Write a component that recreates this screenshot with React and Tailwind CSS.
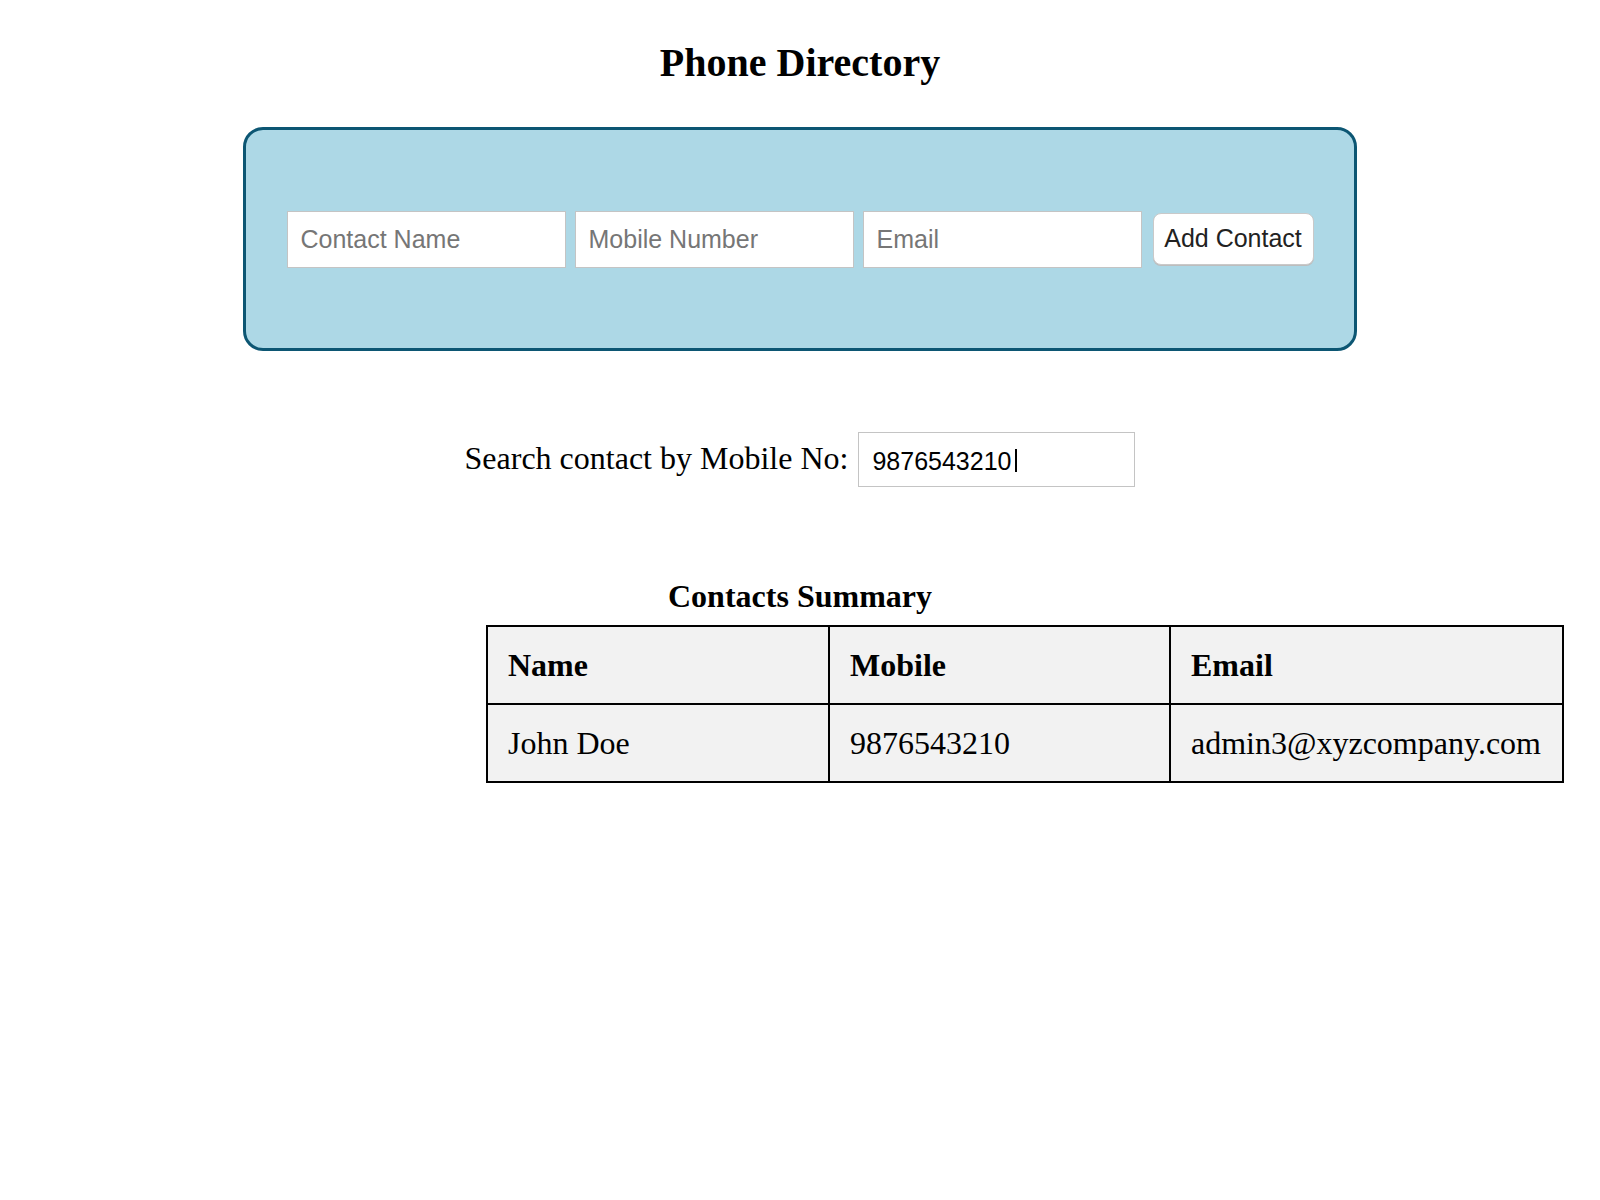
import React from "react";

export default function App() {
  return (
    <div className="min-h-screen bg-white text-black font-['Liberation_Serif','Times_New_Roman',serif]">
      <h1 className="pt-[41px] text-center text-[40px] font-bold leading-[44px]">Phone Directory</h1>

      <div className="mx-auto mt-[42px] flex h-[224px] w-[1114px] items-center justify-center gap-[9px] rounded-[20px] border-[3px] border-[#0c5673] bg-[#add8e6] font-['Liberation_Sans',Arial,sans-serif]">
        <input
          type="text"
          placeholder="Contact Name"
          className="h-[57px] w-[279px] border border-[#c4c4c4] bg-white pl-[13px] text-[25px] text-black outline-none placeholder:text-[#767676]"
        />
        <input
          type="text"
          placeholder="Mobile Number"
          className="h-[57px] w-[279px] border border-[#c4c4c4] bg-white pl-[13px] text-[25px] text-black outline-none placeholder:text-[#767676]"
        />
        <input
          type="text"
          placeholder="Email"
          className="h-[57px] w-[279px] border border-[#c4c4c4] bg-white pl-[13px] text-[25px] text-black outline-none placeholder:text-[#767676]"
        />
        <button
          type="button"
          className="ml-[2px] h-[52px] w-[161px] rounded-[8px] border border-[#c9c9c9] bg-white text-[25px] text-[#222222] shadow-[0_1px_0_#bdbdbd]"
        >
          Add Contact
        </button>
      </div>

      <div className="mt-[81px] flex items-start justify-center gap-[10px]">
        <label className="mt-[8px] text-[32px] leading-[36px]">Search contact by Mobile No:</label>
        <div className="flex h-[55px] w-[277px] items-center border border-[#c4c4c4] bg-white pl-[13px] pt-[2px] font-['Liberation_Sans',Arial,sans-serif] text-[25px] leading-[30px] text-black">
          <span>9876543210</span>
          <span className="ml-[4px] h-[23px] w-[1.5px] bg-black" />
        </div>
      </div>

      <h2 className="mt-[91px] text-center text-[32px] font-bold leading-[36px]">Contacts Summary</h2>

      <table className="ml-[486px] mt-[11px] w-[1076px] table-fixed border-collapse border-2 border-black bg-[#f2f2f2] text-[32px] leading-[36px]">
        <colgroup>
          <col className="w-[342px]" />
          <col className="w-[341px]" />
          <col className="w-[393px]" />
        </colgroup>
        <thead>
          <tr>
            <th className="border-2 border-black px-[20px] py-[20px] text-left font-bold">Name</th>
            <th className="border-2 border-black px-[20px] py-[20px] text-left font-bold">Mobile</th>
            <th className="border-2 border-black px-[20px] py-[20px] text-left font-bold">Email</th>
          </tr>
        </thead>
        <tbody>
          <tr>
            <td className="border-2 border-black px-[20px] py-[20px]">John Doe</td>
            <td className="border-2 border-black px-[20px] py-[20px]">9876543210</td>
            <td className="border-2 border-black px-[20px] py-[20px]">admin3@xyzcompany.com</td>
          </tr>
        </tbody>
      </table>
    </div>
  );
}
